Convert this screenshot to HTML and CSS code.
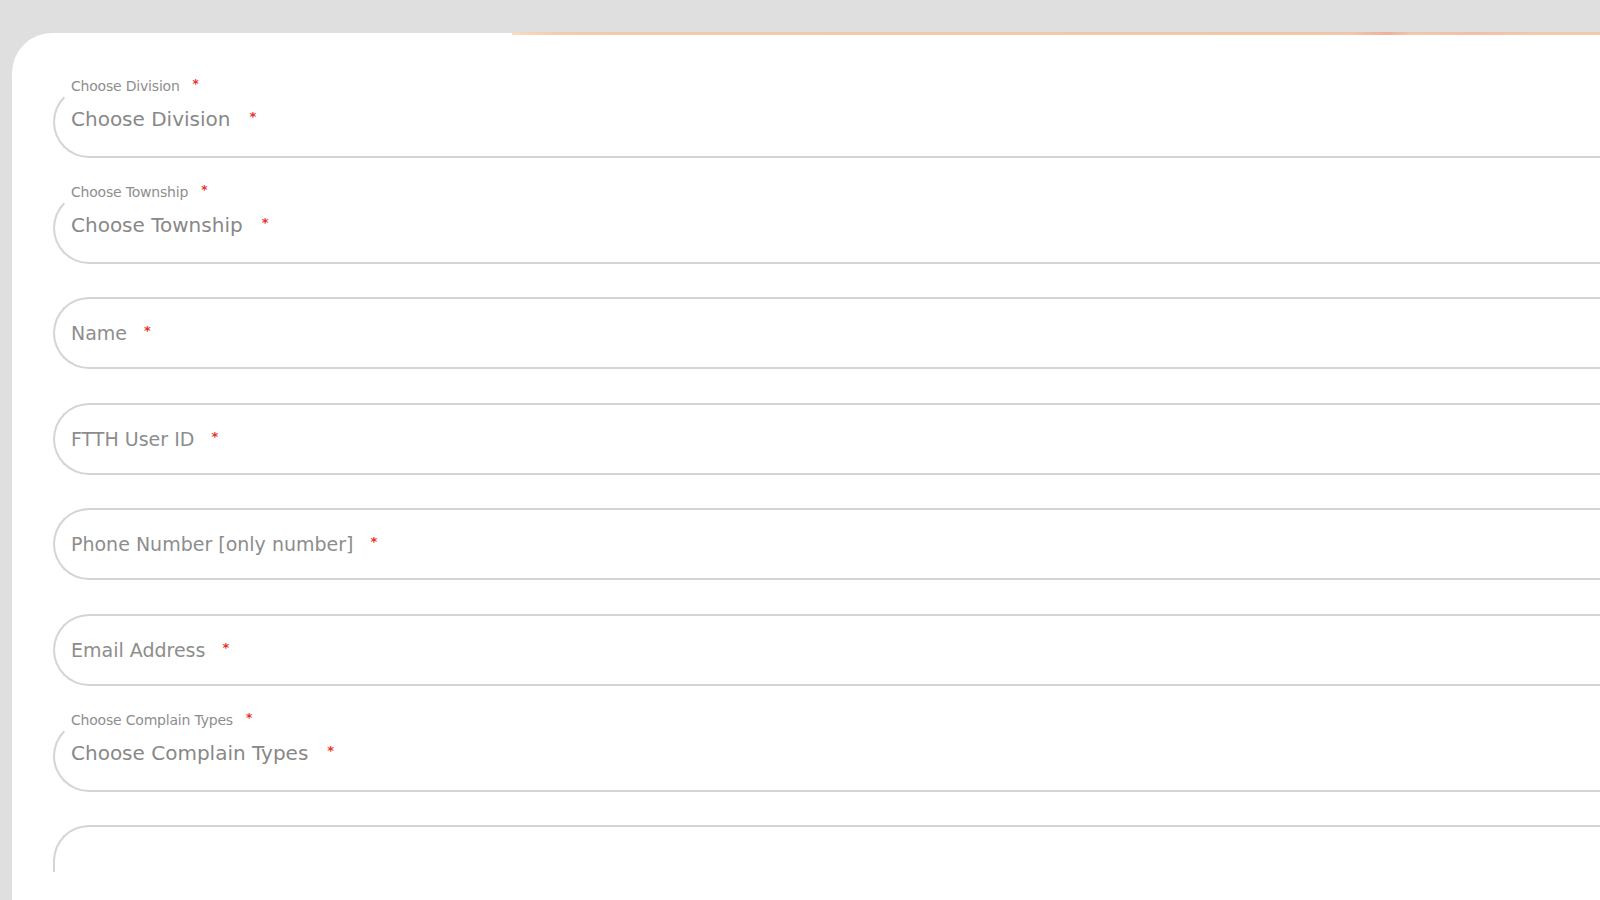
FILE: index.html
```html
<!DOCTYPE html>
<html lang="en">
<head>
<meta charset="utf-8">
<title>Complaint Form</title>
<link rel="stylesheet" href="styles.css">
</head>
<body>
<main class="card">
  <div class="accent"></div>
  <div class="scroll">
    <form class="fields">
      <div class="field select">
        <span class="float-label">Choose Division<span class="req">*</span></span>
        <span class="value">Choose Division<span class="req">*</span></span>
      </div>
      <div class="field select">
        <span class="float-label">Choose Township<span class="req">*</span></span>
        <span class="value">Choose Township<span class="req">*</span></span>
      </div>
      <div class="field">
        <span class="placeholder">Name<span class="req">*</span></span>
      </div>
      <div class="field">
        <span class="placeholder">FTTH User ID<span class="req">*</span></span>
      </div>
      <div class="field">
        <span class="placeholder">Phone Number [only number]<span class="req">*</span></span>
      </div>
      <div class="field">
        <span class="placeholder">Email Address<span class="req">*</span></span>
      </div>
      <div class="field select">
        <span class="float-label">Choose Complain Types<span class="req">*</span></span>
        <span class="value">Choose Complain Types<span class="req">*</span></span>
      </div>
      <div class="field tall"></div>
    </form>
  </div>
</main>
</body>
</html>
```

FILE: styles.css
```css
html, body {
  margin: 0;
  padding: 0;
  height: 100%;
}
body {
  background: #dfdfdf;
  overflow: hidden;
  font-family: "DejaVu Sans", "Liberation Sans", sans-serif;
  padding: 33px 0 0 12px;
  box-sizing: border-box;
}
.card {
  position: relative;
  width: 1700px;
  min-height: 900px;
  background: #ffffff;
  border-radius: 40px 0 0 0;
  padding: 20px 0 0 41px;
  box-sizing: border-box;
}
.accent {
  position: absolute;
  top: -1px;
  left: 500px;
  right: 0;
  height: 3px;
  background: linear-gradient(90deg, #f6d9bd 0%, #f3c7a2 4%, #f2c29c 60%, #f3bfa0 70%, #f0a790 73%, #f3c3a3 75%, #f2b8a0 80%, #f3c4a2 85%, #f3c6a2 100%);
  opacity: 0.9;
}
.scroll {
  height: 819px;
  padding-top: 33px;
  box-sizing: border-box;
  overflow: hidden;
}
.fields {
  display: flex;
  flex-direction: column;
  gap: 33.6px;
  margin: 0;
}
.field {
  position: relative;
  height: 72px;
  box-sizing: border-box;
  border: 2px solid #d4d4d4;
  border-right: none;
  border-radius: 36px 0 0 36px;
  display: flex;
  align-items: center;
  padding-left: 16px;
  flex-shrink: 0;
}
.field.select {
  border-top-color: transparent;
  padding-bottom: 6px;
}
.field.tall {
  height: 140px;
}
.float-label {
  position: absolute;
  top: -13px;
  left: 16px;
  font-size: 14px;
  color: #8e8e8e;
  background: #ffffff;
  line-height: 18px;
  letter-spacing: -0.2px;
}
.value {
  font-size: 20px;
  color: #888888;
}
.placeholder {
  font-size: 19px;
  color: #8d8d8d;
}
.req {
  color: #e8312a;
  font-size: 13px;
  font-weight: bold;
  vertical-align: 5px;
  margin-left: 17px;
}
.float-label .req {
  margin-left: 13px;
  font-size: 12px;
  vertical-align: 3px;
}
.value .req {
  margin-left: 19px;
}
```
